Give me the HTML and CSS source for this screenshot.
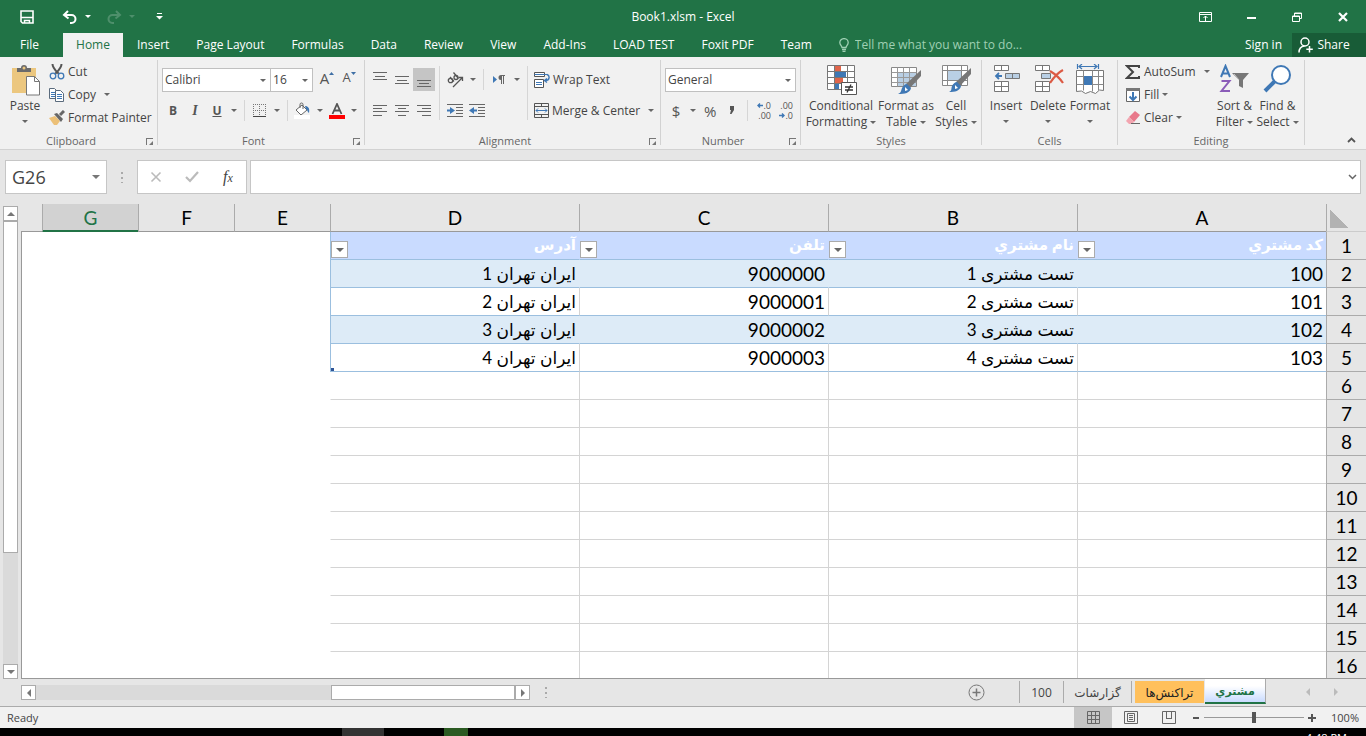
FILE: index.html
```html
<!DOCTYPE html>
<html lang="en">

<head>
    <meta charset="UTF-8">
    <meta name="viewport" content="width=device-width, initial-scale=1.0">
    <title>Book1.xlsm - Excel</title>
    <link rel="stylesheet" href="styles.css">
</head>

<body>
    <header class="top">
        <div class="titlebar">
            <div class="quick">
                <button class="save" aria-label="Save">
                    <svg width="14" height="14" viewBox="0 0 14 14" fill="none" stroke="#fff" stroke-width="1.600">
                        <path d="M1 1h12v12H2.500L1 11.500z" />
                        <path d="M1 7.500h12M4.500 13v-2.500h5V13" stroke-width="1.500" />
                    </svg>
                </button>
                <button class="undo" aria-label="Undo">
                    <svg width="16" height="14" viewBox="0 0 16 14" fill="none" stroke="#fff" stroke-width="2">
                        <path d="M6 1L2 5l4.500 3.500M2 5h7.500a4 4 0 0 1 0 8H8" />
                    </svg>
                </button>
                <button class="drop" aria-label="Undo list"><span class="caret"></span></button>
                <button class="undo dim" aria-label="Redo">
                    <svg width="16" height="14" viewBox="0 0 16 14" fill="none" stroke="#fff" stroke-width="2">
                        <path d="M10 1l4 4-4.500 3.500M14 5H6.500a4 4 0 0 0 0 8H8" />
                    </svg>
                </button>
                <button class="drop dim" aria-label="Redo list"><span class="caret"></span></button>
                <button class="customize" aria-label="Customize Quick Access Toolbar">
                    <svg width="7" height="7" viewBox="0 0 7 7" fill="#fff">
                        <path d="M1 0h5v1H1zM0 3h7L3.500 6.500z" />
                    </svg>
                </button>
            </div>
            <h1>Book1.xlsm - Excel</h1>
            <div class="window-buttons">
                <button aria-label="Ribbon Display Options">
                    <svg width="13" height="10" viewBox="0 0 13 10" fill="none" stroke="#fff">
                        <path d="M.5.500h12v9H.5zM.5 2.500h12M6.500 9V4M4.500 6l2-2 2 2" />
                    </svg>
                </button>
                <button aria-label="Minimize">
                    <svg width="9" height="6" viewBox="0 0 9 6"><path d="M0 3h9v2H0z" fill="#fff" /></svg>
                </button>
                <button aria-label="Restore Down">
                    <svg width="10" height="10" viewBox="0 0 10 10" fill="none" stroke="#fff">
                        <path d="M.5 4h7v5.500h-7zM0 4.500h8M2.500 4V1h7v5.500h-2M2 1.500h8" />
                    </svg>
                </button>
                <button aria-label="Close">
                    <svg width="10" height="10" viewBox="0 0 10 10"><path d="M1 1l8 8M9 1L1 9" stroke="#fff" stroke-width="2.200" /></svg>
                </button>
            </div>
        </div>
        <nav class="tabs">
            <a class="file" href="#">File</a>
            <a class="active" href="#">Home</a>
            <a href="#">Insert</a>
            <a href="#">Page Layout</a>
            <a href="#">Formulas</a>
            <a href="#">Data</a>
            <a href="#">Review</a>
            <a href="#">View</a>
            <a href="#">Add-Ins</a>
            <a href="#">LOAD TEST</a>
            <a href="#">Foxit PDF</a>
            <a href="#">Team</a>
            <label class="tell">
                <svg width="10" height="14" viewBox="0 0 10 14" fill="none" stroke="#9fd0b3" stroke-width="1.300">
                    <path d="M3 9.500C3 8 .8 7 .8 4.600a4.200 4 0 0 1 8.400 0C9.200 7 7 8 7 9.500zM3 11.500h4M3.500 13.300h3" />
                </svg>
                <input type="text" placeholder="Tell me what you want to do..." aria-label="Tell me what you want to do">
            </label>
            <a class="signin" href="#">Sign in</a>
            <button class="share">
                <svg width="15" height="16" viewBox="0 0 15 16" fill="none" stroke="#fff" stroke-width="1.500">
                    <circle cx="7" cy="5" r="4" />
                    <path d="M1 15.500c0-4 2-6 5.500-6.500M11.500 9v6.500M8.300 12.300h6.500" />
                </svg>
                Share
            </button>
        </nav>
    </header>

    <section class="ribbon">
        <div class="group clipboard">
            <div class="group-body">
                <button class="big paste">
                    <svg width="32" height="32" viewBox="0 0 32 32">
                        <path d="M3 4h24v25H3z" fill="#ecc77f" />
                        <path d="M8 8V4h4a3 3 0 0 1 6 0h4v4z" fill="#6b6b6b" />
                        <circle cx="15" cy="4" r="1.500" fill="#ecc77f" />
                        <path d="M17.500 12.500h8l5 5v13.500h-13z" fill="#fff" stroke="#777" />
                        <path d="M25.500 12.500v5h5" fill="none" stroke="#777" />
                    </svg>
                    <span>Paste</span>
                    <span class="caret"></span>
                </button>
                <div class="stack">
                    <button class="line">
                        <svg width="16" height="16" viewBox="0 0 16 16" fill="none">
                            <path d="M3.500 0c0 4 2.500 6 6.500 10M12.500 0C12.500 4 10 6 6 10" stroke="#555" stroke-width="2" />
                            <circle cx="4" cy="12" r="2.800" stroke="#3f78b5" stroke-width="1.300" />
                            <circle cx="12" cy="12" r="2.800" stroke="#3f78b5" stroke-width="1.300" />
                        </svg>
                        Cut
                    </button>
                    <button class="line">
                        <svg width="16" height="16" viewBox="0 0 16 16" fill="#fff" stroke="#5a6b7d">
                            <path d="M.5 1.500h5l2 2v8h-7z" />
                            <path d="M2 5.500h4M2 7.500h4M2 9.500h4" stroke="#3f78b5" />
                            <path d="M6.500 3.500h5l3 3v8h-8z" />
                            <path d="M8 7.500h5M8 9.500h5M8 11.500h5" stroke="#3f78b5" />
                        </svg>
                        Copy <span class="caret far"></span>
                    </button>
                    <button class="line">
                        <svg width="16" height="16" viewBox="0 0 16 16">
                            <path d="M0 8l6-2 5 5-3 4H5z" fill="#ecc077" />
                            <path d="M5 4l3-1 6 6-2 3z" fill="#666" />
                            <path d="M11 5l4-4" stroke="#666" stroke-width="3" />
                        </svg>
                        Format Painter
                    </button>
                </div>
            </div>
            <div class="group-title"><span>Clipboard</span><button class="launcher" aria-label="Clipboard settings"></button></div>
        </div>

        <div class="group font">
            <div class="group-body rows">
                <div class="row">
                    <span class="combo name"><select aria-label="Font"><option>Calibri</option></select></span>
                    <span class="combo size"><select aria-label="Font size"><option>16</option></select></span>
                    <button class="tool grow" aria-label="Increase Font Size">A<svg width="5" height="3" viewBox="0 0 5 3"><path d="M0 3h5L2.500 0z" fill="#3f6fa5" /></svg></button>
                    <button class="tool shrink" aria-label="Decrease Font Size">A<svg width="5" height="3" viewBox="0 0 5 3"><path d="M0 0h5L2.500 3z" fill="#3f6fa5" /></svg></button>
                </div>
                <div class="row">
                    <button class="tool"><b>B</b></button>
                    <button class="tool italic"><i>I</i></button>
                    <button class="tool"><u>U</u></button>
                    <button class="drop" aria-label="Underline list"><span class="caret"></span></button>
                    <span class="sep"></span>
                    <button class="tool" aria-label="Borders">
                        <svg width="14" height="14" viewBox="0 0 14 14" fill="none" stroke="#777" stroke-dasharray="1 1">
                            <path d="M0 .5h13M0 6.500h13M.5 0v12M6.500 0v12M12.500 0v12" />
                            <path d="M0 12.500h13" stroke="#444" stroke-dasharray="none" />
                        </svg>
                    </button>
                    <button class="drop" aria-label="Border list"><span class="caret"></span></button>
                    <span class="sep"></span>
                    <button class="tool" aria-label="Fill Color">
                        <svg width="17" height="17" viewBox="0 0 17 17">
                            <path d="M2 8l6-5 5 5-6 5z" fill="#fff" stroke="#666" />
                            <path d="M6 6V2.500a1.500 1.500 0 0 1 3 0V7" fill="none" stroke="#666" />
                            <path d="M11 4c3 0 5 2 4 7-2-1-1-3-3-4z" fill="#3f78b5" />
                            <path d="M0 13h16v4H0z" fill="#fff" />
                        </svg>
                    </button>
                    <button class="drop" aria-label="Fill list"><span class="caret"></span></button>
                    <button class="tool" aria-label="Font Color">
                        <svg width="16" height="16" viewBox="0 0 16 16">
                            <path d="M3.500 11L8 1l4.500 10M5 7.500h6" fill="none" stroke="#555" stroke-width="1.800" />
                            <path d="M0 12h16v4H0z" fill="#f00" />
                        </svg>
                    </button>
                    <button class="drop" aria-label="Font color list"><span class="caret"></span></button>
                </div>
            </div>
            <div class="group-title"><span>Font</span><button class="launcher" aria-label="Font settings"></button></div>
        </div>

        <div class="group alignment">
            <div class="group-body">
                <div class="rows">
                    <div class="row">
                        <button class="tool" aria-label="Top Align"><svg width="14" height="16" viewBox="0 0 14 16" stroke="#666"><path d="M0 .5h14M2 4.500h10M0 7.500h14" /></svg></button>
                        <button class="tool" aria-label="Middle Align"><svg width="14" height="16" viewBox="0 0 14 16" stroke="#666"><path d="M0 4.500h14M2 8.500h10M0 11.500h14" /></svg></button>
                        <button class="tool on" aria-label="Bottom Align"><svg width="14" height="16" viewBox="0 0 14 16" stroke="#666"><path d="M0 8.500h14M2 11.500h10M0 14.500h14" /></svg></button>
                    </div>
                    <div class="row">
                        <button class="tool" aria-label="Align Left"><svg width="14" height="12" viewBox="0 0 14 12" stroke="#666"><path d="M0 .5h14M0 3.500h9M0 6.500h14M0 10.500h9" /></svg></button>
                        <button class="tool" aria-label="Center"><svg width="14" height="12" viewBox="0 0 14 12" stroke="#666"><path d="M0 .5h14M3 3.500h8M0 6.500h14M3 10.500h8" /></svg></button>
                        <button class="tool" aria-label="Align Right"><svg width="14" height="12" viewBox="0 0 14 12" stroke="#666"><path d="M0 .5h14M5 3.500h9M0 6.500h14M5 10.500h9" /></svg></button>
                    </div>
                </div>
                <span class="sep tall"></span>
                <div class="rows">
                    <div class="row">
                        <button class="tool" aria-label="Orientation">
                            <svg width="18" height="16" viewBox="0 0 18 16" fill="none" stroke="#555" stroke-width="1.300">
                                <circle cx="4.500" cy="8.500" r="2.200" /><path d="M4 5l4 4.500M7.500.500l5 6" /><circle cx="10" cy="5.500" r="2" />
                                <path d="M7 15l9-9M13 5.500h3.500V9" />
                            </svg>
                        </button>
                        <button class="drop" aria-label="Orientation list"><span class="caret"></span></button>
                        <span class="sep"></span>
                        <button class="tool" aria-label="Text direction">
                            <svg width="12" height="10" viewBox="0 0 12 10">
                                <path d="M0 1l4 3.500L0 8z" fill="#3f78b5" />
                                <path d="M8 0h4v1h-1v8h-1V1H9v8H8V5a2.500 2.500 0 0 1 0-5z" fill="#666" />
                            </svg>
                        </button>
                        <button class="drop" aria-label="Direction list"><span class="caret"></span></button>
                    </div>
                    <div class="row">
                        <button class="tool" aria-label="Decrease Indent">
                            <svg width="16" height="14" viewBox="0 0 16 14"><path d="M0 .5h16M9 3.500h7M9 6.500h7M9 9.500h7M0 12.500h16" stroke="#666" /><path d="M0 5.500h3V3l5 3.500L3 10V7.500H0z" fill="#3f78b5" /></svg>
                        </button>
                        <button class="tool" aria-label="Increase Indent">
                            <svg width="16" height="14" viewBox="0 0 16 14"><path d="M0 .5h16M9 3.500h7M9 6.500h7M9 9.500h7M0 12.500h16" stroke="#666" /><path d="M8 5.500H5V3L0 6.500 5 10V7.500h3z" fill="#3f78b5" /></svg>
                        </button>
                    </div>
                </div>
                <span class="sep tall"></span>
                <div class="rows wide">
                    <div class="row">
                        <button class="line">
                            <svg width="16" height="16" viewBox="0 0 16 16" fill="none" stroke="#555">
                                <path d="M.5.500h10v4H.5zM.5 7.500h9v8h-9z" fill="#fff" />
                                <path d="M.5 2.500h13M2 10.500h6M2 12.500h6" stroke="#3f78b5" />
                                <path d="M13 2.500c3 1 3 6-1.500 6M13 6.500l-2.500 2 2.500 2" stroke="#3f78b5" stroke-width="1.400" />
                            </svg>
                            Wrap Text
                        </button>
                    </div>
                    <div class="row">
                        <button class="line">
                            <svg width="15" height="15" viewBox="0 0 15 15" fill="none" stroke="#555">
                                <path d="M.5.500h14v14H.5zM.5 3.500h14M.5 11.500h14M7.500.500v3M7.500 11.500v3" />
                                <path d="M2 7.500h11M4 5.500l-2 2 2 2M11 5.500l2 2-2 2" stroke="#3f78b5" />
                            </svg>
                            Merge &amp; Center <span class="caret far"></span>
                        </button>
                    </div>
                </div>
            </div>
            <div class="group-title"><span>Alignment</span><button class="launcher" aria-label="Alignment settings"></button></div>
        </div>

        <div class="group number">
            <div class="group-body rows">
                <div class="row">
                    <span class="combo format"><select aria-label="Number format"><option>General</option></select></span>
                </div>
                <div class="row">
                    <button class="tool sign">$</button>
                    <button class="drop" aria-label="Currency list"><span class="caret"></span></button>
                    <button class="tool sign">%</button>
                    <button class="tool comma" aria-label="Comma Style">
                        <svg width="6" height="9" viewBox="0 0 6 9"><path d="M1 0h4v4L2.500 8H1l1-4H1z" fill="#555" /></svg>
                    </button>
                    <span class="sep"></span>
                    <button class="tool decimals" aria-label="Increase Decimal"><span><svg width="6" height="5" viewBox="0 0 6 5"><path d="M6 2.500H1M3 .5l-2 2 2 2" fill="none" stroke="#3f78b5" stroke-width="1.400" /></svg>.0</span><span>.00</span></button>
                    <button class="tool decimals" aria-label="Decrease Decimal"><span>.00</span><span><svg width="6" height="5" viewBox="0 0 6 5"><path d="M0 2.500h5M3 .5l2 2-2 2" fill="none" stroke="#3f78b5" stroke-width="1.400" /></svg>.0</span></button>
                </div>
            </div>
            <div class="group-title"><span>Number</span><button class="launcher" aria-label="Number settings"></button></div>
        </div>

        <div class="group styles">
            <div class="group-body">
                <button class="big cond">
                    <svg width="32" height="32" viewBox="0 0 32 32">
                        <path d="M2.500 1.500h27v24h-27zM2.500 7.500h27M2.500 13.500h27M2.500 19.500h27M9.500 1.500v24M22.500 1.500v24" fill="#fff" stroke="#777" />
                        <path d="M10 2h6v5h-6zM10 14h8v5h-8z" fill="#e0654b" />
                        <path d="M10 8h11v5H10zM10 20h4v5h-4z" fill="#3f78b5" />
                        <path d="M16.500 18.500h15v12h-15z" fill="#fff" stroke="#555" />
                        <path d="M20 23h8M20 26h8M26 20.500l-4 8" stroke="#333" stroke-width="1.300" />
                    </svg>
                    <span>Conditional<br>Formatting <i class="caret"></i></span>
                </button>
                <button class="big table-style">
                    <svg width="32" height="32" viewBox="0 0 32 32">
                        <path d="M1.500 3.500h25v19h-25z" fill="#fff" stroke="#888" />
                        <path d="M8 9h18v13H8z" fill="#b9cfe4" />
                        <path d="M1.500 8.500h25M1.500 13.500h25M1.500 18.500h25M7.500 3.500v19M13.500 3.500v19M19.500 3.500v19" stroke="#999" />
                        <path d="M31 6v6L20 24l-4-4z" fill="#777" />
                        <path d="M17 20l4 4c-1 5-6 6-13 6 3-1 3-3 4-6 1-2 3-4 5-4z" fill="#3f78b5" />
                        <path d="M15 23l3 3-3 1z" fill="#fff" />
                    </svg>
                    <span>Format as<br>Table <i class="caret"></i></span>
                </button>
                <button class="big cell-style">
                    <svg width="32" height="32" viewBox="0 0 32 32">
                        <path d="M2.500 1.500h25v20h-25zM2.500 6.500h25M2.500 16.500h25M7.500 1.500v20M21.500 1.500v20" fill="#fff" stroke="#888" />
                        <path d="M8 7h13v9H8z" fill="#b9cfe4" />
                        <path d="M31 4v6L20 22l-4-4z" fill="#777" />
                        <path d="M17 18l4 4c-1 5-6 6-12 6 3-1 2-3 3-6 1-2 3-4 5-4z" fill="#3f78b5" />
                        <path d="M15 21l3 3-3 1z" fill="#fff" />
                    </svg>
                    <span>Cell<br>Styles <i class="caret"></i></span>
                </button>
            </div>
            <div class="group-title"><span>Styles</span></div>
        </div>

        <div class="group cells">
            <div class="group-body">
                <button class="big">
                    <svg width="32" height="32" viewBox="0 0 32 32">
                        <path d="M4.500 1.500h14v5h-14zM11.500 1.500v5M4.500 17.500h14v10h-14zM4.500 22.500h14M11.500 17.500v10" fill="#fff" stroke="#777" />
                        <path d="M15.500 9.500h14v5h-14zM22.500 9.500v5" fill="#b9cfe4" stroke="#777" />
                        <path d="M12 12H6M9 9l-3 3 3 3" fill="none" stroke="#3f78b5" stroke-width="1.800" />
                    </svg>
                    <span>Insert</span>
                    <span class="caret"></span>
                </button>
                <button class="big">
                    <svg width="32" height="32" viewBox="0 0 32 32">
                        <path d="M3.500 1.500h14v5h-14zM10.500 1.500v5M3.500 17.500h14v10h-14zM3.500 22.500h14M10.500 17.500v10" fill="#fff" stroke="#777" />
                        <path d="M9.500 9.500h9v5h-9z" fill="#b9cfe4" stroke="#777" />
                        <path d="M18 7c5 3 9 6 13 12M31 6c-6 3-9 7-13 13" fill="none" stroke="#dc5a44" stroke-width="2.200" />
                    </svg>
                    <span>Delete</span>
                    <span class="caret"></span>
                </button>
                <button class="big">
                    <svg width="32" height="32" viewBox="0 0 32 32">
                        <path d="M2.500 6.500h27v20l-4-.5-4 3.500-5-2-5 2-4-2.500-5 .5z" fill="#fff" stroke="#777" />
                        <path d="M2.500 12.500h27M2.500 20.500h27M9.500 6.500v20M18.500 6.500v21M24.500 6.500v20" stroke="#888" />
                        <path d="M10 12h8v9h-8z" fill="#3f78b5" />
                        <path d="M3.500 0v5M24.500 0v5M5 2.500h18M8 0L5 2.500 8 5M20 0l3 2.500L20 5" fill="none" stroke="#3f78b5" stroke-width="1.200" />
                    </svg>
                    <span>Format</span>
                    <span class="caret"></span>
                </button>
            </div>
            <div class="group-title"><span>Cells</span></div>
        </div>

        <div class="group editing">
            <div class="group-body">
                <div class="stack">
                    <button class="line">
                        <svg width="16" height="16" viewBox="0 0 16 16" fill="none" stroke="#444" stroke-width="2"><path d="M14 4V2H2l6 6-6 6h12v-2" /></svg>
                        AutoSum <span class="caret far"></span>
                    </button>
                    <button class="line">
                        <svg width="16" height="16" viewBox="0 0 16 16" fill="none"><path d="M1.500 1.500h13v13h-13z" fill="#fff" stroke="#666" /><path d="M1 1h14v3H1z" fill="#777" /><path d="M8 5v8M4.500 9.500L8 13l3.500-3.500" stroke="#3f78b5" stroke-width="2" /></svg>
                        Fill <span class="caret"></span>
                    </button>
                    <button class="line">
                        <svg width="16" height="16" viewBox="0 0 16 16"><path d="M4 7l6-6 5 4-6 7z" fill="#e8788a" /><path d="M4 7l5 5-2 2H4L1 11z" fill="#f3a5b0" /><path d="M6 13.500h9" stroke="#666" /></svg>
                        Clear <span class="caret"></span>
                    </button>
                </div>
                <button class="big">
                    <svg width="32" height="32" viewBox="0 0 32 32" fill="none">
                        <path d="M2 13L6.500 2 11 13M3.500 9.500h6" stroke="#3f78b5" stroke-width="2" />
                        <path d="M2.500 17h8l-8 10h8.500" stroke="#8a5cb8" stroke-width="2" />
                        <path d="M13 9h17l-6 7v8l-4-2v-6z" fill="#777" />
                        <path d="M15 10l5 6" stroke="#ccc" />
                    </svg>
                    <span>Sort &amp;<br>Filter <i class="caret"></i></span>
                </button>
                <button class="big">
                    <svg width="32" height="32" viewBox="0 0 32 32" fill="none" stroke="#3f78b5">
                        <circle cx="19" cy="11" r="9" fill="#fff" stroke-width="2" />
                        <path d="M12.500 17.500L3 27" stroke-width="4" />
                    </svg>
                    <span>Find &amp;<br>Select <i class="caret"></i></span>
                </button>
            </div>
            <div class="group-title"><span>Editing</span></div>
        </div>

        <button class="collapse" aria-label="Collapse the Ribbon">
            <svg width="9" height="6" viewBox="0 0 9 6"><path d="M1 5l3.500-3.500L8 5" fill="none" stroke="#555" stroke-width="1.800" /></svg>
        </button>
    </section>

    <section class="formula">
        <div class="namebox">
            <input type="text" value="G26" aria-label="Name Box">
            <button aria-label="Names"><span class="caret large"></span></button>
        </div>
        <span class="dots"></span>
        <div class="fx">
            <button aria-label="Cancel"><svg width="12" height="12" viewBox="0 0 12 12"><path d="M1.500 1.500l9 9M10.500 1.500l-9 9" stroke="#bbb" stroke-width="1.600" /></svg></button>
            <button aria-label="Enter"><svg width="14" height="12" viewBox="0 0 14 12"><path d="M1 6l4 4 8-9" fill="none" stroke="#bbb" stroke-width="2.200" /></svg></button>
            <button class="function" aria-label="Insert Function"><i>f<small>x</small></i></button>
        </div>
        <div class="formula-input">
            <input type="text" aria-label="Formula Bar">
            <button aria-label="Expand Formula Bar"><svg width="9" height="6" viewBox="0 0 9 6"><path d="M1 1l3.500 3.500L8 1" fill="none" stroke="#666" stroke-width="1.500" /></svg></button>
        </div>
    </section>

    <main class="workbook">
        <div class="vscroll">
            <button aria-label="Scroll up"><span class="arrow up"></span></button>
            <div class="track"><div class="thumb"></div></div>
            <button aria-label="Scroll down"><span class="arrow down"></span></button>
        </div>
        <div class="sheet" dir="rtl">
            <table>
                <colgroup>
                    <col class="col-rows">
                    <col class="col-data" span="4">
                    <col class="col-small" span="3">
                    <col>
                </colgroup>
                <thead>
                    <tr>
                        <th class="corner"></th>
                        <th>A</th>
                        <th>B</th>
                        <th>C</th>
                        <th>D</th>
                        <th>E</th>
                        <th>F</th>
                        <th class="selected">G</th>
                        <th class="edge"></th>
                    </tr>
                </thead>
                <tbody>
                    <tr class="head">
                        <th>1</th>
                        <td><div class="field"><span>كد مشتري</span><button aria-label="Filter"><span class="caret large"></span></button></div></td>
                        <td><div class="field"><span>نام مشتري</span><button aria-label="Filter"><span class="caret large"></span></button></div></td>
                        <td><div class="field"><span>تلفن</span><button aria-label="Filter"><span class="caret large"></span></button></div></td>
                        <td><div class="field"><span>آدرس</span><button aria-label="Filter"><span class="caret large"></span></button></div></td>
                        <td class="blank" colspan="4" rowspan="16"></td>
                    </tr>
                    <tr class="data band">
                        <th>2</th>
                        <td>100</td>
                        <td class="fa">تست مشتری 1</td>
                        <td>9000000</td>
                        <td class="fa">ایران تهران 1</td>
                    </tr>
                    <tr class="data">
                        <th>3</th>
                        <td>101</td>
                        <td class="fa">تست مشتری 2</td>
                        <td>9000001</td>
                        <td class="fa">ایران تهران 2</td>
                    </tr>
                    <tr class="data band">
                        <th>4</th>
                        <td>102</td>
                        <td class="fa">تست مشتری 3</td>
                        <td>9000002</td>
                        <td class="fa">ایران تهران 3</td>
                    </tr>
                    <tr class="data last">
                        <th>5</th>
                        <td>103</td>
                        <td class="fa">تست مشتری 4</td>
                        <td>9000003</td>
                        <td class="fa">ایران تهران 4</td>
                    </tr>
                    <tr><th>6</th><td></td><td></td><td></td><td></td></tr>
                    <tr><th>7</th><td></td><td></td><td></td><td></td></tr>
                    <tr><th>8</th><td></td><td></td><td></td><td></td></tr>
                    <tr><th>9</th><td></td><td></td><td></td><td></td></tr>
                    <tr><th>10</th><td></td><td></td><td></td><td></td></tr>
                    <tr><th>11</th><td></td><td></td><td></td><td></td></tr>
                    <tr><th>12</th><td></td><td></td><td></td><td></td></tr>
                    <tr><th>13</th><td></td><td></td><td></td><td></td></tr>
                    <tr><th>14</th><td></td><td></td><td></td><td></td></tr>
                    <tr><th>15</th><td></td><td></td><td></td><td></td></tr>
                    <tr><th>16</th><td></td><td></td><td></td><td></td></tr>
                </tbody>
            </table>
        </div>
    </main>

    <div class="sheetbar">
        <div class="hscroll">
            <button aria-label="Scroll left"><span class="arrow left"></span></button>
            <div class="track"><div class="thumb"></div></div>
            <button aria-label="Scroll right"><span class="arrow right"></span></button>
        </div>
        <span class="dots"></span>
        <button class="add" aria-label="New sheet">
            <svg width="17" height="17" viewBox="0 0 17 17" fill="none" stroke="#777"><circle cx="8.500" cy="8.500" r="7.500" /><path d="M8.500 4.500v8M4.500 8.500h8" stroke-width="1.500" /></svg>
        </button>
        <div class="sheets" dir="rtl">
            <button class="current">مشتري</button>
            <button class="orange">تراكنش‌ها</button>
            <button class="plain">گزارشات</button>
            <button class="plain">100</button>
        </div>
        <div class="sheet-nav">
            <button aria-label="Previous sheet"><span class="arrow left"></span></button>
            <button aria-label="Next sheet"><span class="arrow right"></span></button>
        </div>
    </div>

    <footer class="status">
        <span class="ready">Ready</span>
        <button class="view on" aria-label="Normal"><svg width="13" height="13" viewBox="0 0 13 13" fill="none" stroke="#666"><path d="M.5.500h12v12H.5zM.5 4.500h12M.5 8.500h12M4.500.500v12M8.500.500v12" /></svg></button>
        <button class="view" aria-label="Page Layout"><svg width="14" height="13" viewBox="0 0 14 13" fill="none" stroke="#666"><path d="M.5.500h13v12H.5zM3.500 2.500h7v8h-7zM5 4.500h4M5 6.500h4M5 8.500h4" /></svg></button>
        <button class="view" aria-label="Page Break Preview"><svg width="14" height="13" viewBox="0 0 14 13" fill="none" stroke="#666"><path d="M.5.500h13v12H.5zM4.500.500v7M9.500.500v7M4 7.500h6" /></svg></button>
        <button class="zoom" aria-label="Zoom out"><svg width="8" height="8" viewBox="0 0 8 8"><path d="M1 3h6v2H1z" fill="#555" /></svg></button>
        <input type="range" min="10" max="190" value="100" aria-label="Zoom">
        <button class="zoom" aria-label="Zoom in"><svg width="8" height="8" viewBox="0 0 8 8"><path d="M0 3h3V0h2v3h3v2H5v3H3V5H0z" fill="#555" /></svg></button>
        <span class="percent">100%</span>
    </footer>

    <div class="taskbar">
        <span class="app gray"></span>
        <span class="app green"></span>
        <span class="clock">4:48 PM</span>
    </div>
</body>

</html>
```

FILE: styles.css
```css
* {
    box-sizing: border-box;
}

body {
    margin: 0;
    height: 100vh;
    display: flex;
    flex-direction: column;
    overflow: hidden;
    font-family: "Open Sans", "Noto Sans", sans-serif;
    font-size: 12px;
    color: #444;
    background: #e6e6e6;
}

button {
    display: flex;
    align-items: center;
    justify-content: center;
    padding: 0;
    border: none;
    background: none;
    font: inherit;
    color: inherit;
    cursor: pointer;
}

input,
select {
    font: inherit;
    color: inherit;
    border: none;
    outline: none;
    padding: 0;
}

svg {
    display: block;
    flex-shrink: 0;
}

.caret {
    display: inline-block;
    flex-shrink: 0;
    border: 3px solid transparent;
    border-top-color: currentColor;
    border-bottom: none;
}

.caret.large {
    border-width: 4px;
    border-bottom: none;
}

/* title bar */
.top {
    background: #217346;
    color: #fff;
}

.titlebar {
    display: flex;
    height: 33px;
    align-items: center;
}

.titlebar h1 {
    margin: 0;
    font-size: 12px;
    font-weight: normal;
}

.quick,
.window-buttons {
    flex: 1;
    display: flex;
    height: 30px;
}

.save {
    width: 28px;
    margin: 0 20px 0 13px;
}

.undo {
    width: 18px;
}

.quick .drop {
    width: 18px;
    margin-right: 8px;
}

.dim {
    opacity: .2;
}

.customize {
    width: 20px;
}

.window-buttons {
    justify-content: flex-end;
}

.window-buttons button {
    width: 46px;
}

.tabs {
    display: flex;
    height: 24px;
    line-height: 24px;
}

.tabs a {
    padding: 0 13px 0 14px;
    color: #fff;
    text-decoration: none;
}

.tabs .file {
    width: 63px;
    padding: 0 20px;
}

.tabs .active {
    width: 60px;
    padding: 0;
    text-align: center;
    background: #f1f1f1;
    color: #217346;
}

.tell {
    flex: 1;
    display: flex;
    align-items: center;
    gap: 6px;
    padding-left: 14px;
}

.tell input {
    flex: 1;
    min-width: 0;
    background: none;
}

.tell input::placeholder {
    color: #9fd0b3;
    opacity: 1;
}

.tabs .signin {
    padding: 0 10px;
}

.share {
    width: 74px;
    gap: 4px;
    padding-right: 10px;
    background: #185c37;
}

/* ribbon */
.ribbon {
    display: flex;
    height: 93px;
    padding: 3px 0 4px;
    background: #f1f1f1;
    border-bottom: 1px solid #d2d2d2;
}

.group {
    display: flex;
    flex-direction: column;
    border-right: 1px solid #d2d2d2;
    flex-shrink: 0;
}

.group-body {
    flex: 1;
    display: flex;
}

.group-title {
    display: flex;
    height: 10px;
    line-height: 12px;
    font-size: 11px;
    color: #666;
}

.group-title span {
    flex: 1;
    text-align: center;
}

.launcher {
    position: relative;
    width: 7px;
    height: 7px;
    margin: 3px 4px 0;
    border-top: 1px solid #777;
    border-left: 1px solid #777;
}

.launcher::after {
    content: "";
    position: absolute;
    right: 0;
    bottom: 0;
    border: 2px solid #777;
    border-top-color: transparent;
    border-left-color: transparent;
}

.clipboard {
    width: 158px;
}

.font {
    width: 207px;
}

.alignment {
    width: 296px;
}

.number {
    width: 140px;
}

.styles {
    width: 181px;
}

.cells {
    width: 136px;
}

.editing {
    width: 187px;
}

.big {
    flex-direction: column;
    justify-content: flex-start;
    width: 43px;
    padding-top: 4px;
    line-height: 16px;
    white-space: nowrap;
}

.big svg {
    margin-bottom: 2px;
}

.big > .caret {
    margin-top: 6px;
}

.big .caret {
    color: #666;
    vertical-align: 2px;
}

.paste {
    width: 44px;
    margin-left: 3px;
}

.cond {
    width: 78px;
    margin-left: 1px;
}

.table-style {
    width: 52px;
}

.cell-style {
    width: 48px;
}

.cells .big {
    width: 42px;
}

.cells .group-body,
.editing .group-body {
    padding-left: 3px;
}

.stack {
    display: flex;
    flex-direction: column;
}

.clipboard .stack {
    padding-left: 2px;
}

.editing .stack {
    width: 92px;
    padding-left: 4px;
}

.line {
    height: 23px;
    gap: 3px;
    justify-content: flex-start;
    white-space: nowrap;
}

.line .caret {
    color: #666;
}

.caret.far {
    margin-left: 5px;
}

.rows {
    display: flex;
    flex-direction: column;
    gap: 8px;
    padding: 8px 4px 0;
}

.row {
    display: flex;
    height: 23px;
    align-items: center;
}

.alignment .rows.wide {
    padding-left: 6px;
}

.tool {
    width: 22px;
    height: 23px;
    flex-shrink: 0;
    color: #555;
}

.tool.on {
    background: #c5c5c5;
}

.italic {
    font-family: "Liberation Serif", serif;
    font-size: 14px;
    font-weight: bold;
}

.tool u {
    font-weight: bold;
}

.drop {
    width: 13px;
    height: 23px;
    color: #666;
}

.top .drop {
    height: 30px;
    color: #fff;
}

.sep {
    width: 1px;
    height: 21px;
    margin: 0 4px;
    background: #d6d6d6;
}

.sep.tall {
    height: 54px;
    margin: 6px 0 0;
}

.combo {
    position: relative;
    height: 24px;
    border: 1px solid #c0c0c0;
    background: #fff;
}

.combo::after {
    content: "";
    position: absolute;
    right: 4px;
    top: 10px;
    border: 3px solid transparent;
    border-top-color: #666;
    border-bottom: none;
    pointer-events: none;
}

.combo select {
    width: 100%;
    height: 22px;
    padding-left: 2px;
    appearance: none;
    background: none;
}

.combo.name {
    width: 112px;
}

.combo.size {
    width: 44px;
    margin-left: -1px;
}

.combo.format {
    width: 132px;
}

.grow {
    align-items: baseline;
    margin-left: 3px;
    font-size: 15px;
}

.shrink {
    align-items: baseline;
    font-size: 13px;
}

.grow svg,
.shrink svg {
    align-self: flex-start;
    margin-top: 4px;
}

.sign {
    font-size: 15px;
}

.decimals {
    flex-direction: column;
    font-size: 9px;
    line-height: 10px;
    align-items: flex-end;
    padding-right: 3px;
}

.decimals span {
    display: flex;
    align-items: center;
}

.collapse {
    align-self: flex-end;
    width: 18px;
    height: 10px;
    margin: 0 6px 0 auto;
}

/* formula bar */
.formula {
    display: flex;
    align-items: center;
    height: 54px;
    padding: 0 5px;
}

.namebox,
.fx,
.formula-input {
    display: flex;
    height: 34px;
    border: 1px solid #c6c6c6;
    background: #fff;
}

.namebox {
    width: 102px;
}

.namebox input {
    width: 80px;
    padding-left: 6px;
    font-size: 18px;
}

.namebox button {
    width: 20px;
    color: #777;
}

.dots {
    width: 2px;
    height: 11px;
    background: repeating-linear-gradient(#aaa 0 2px, transparent 2px 5px);
}

.formula .dots {
    margin: 0 14px;
}

.fx {
    width: 110px;
    margin-right: 3px;
}

.fx button {
    flex: 1;
}

.function {
    font-family: "Liberation Serif", serif;
    font-size: 16px;
}

.function small {
    font-size: 12px;
}

.formula-input {
    flex: 1;
}

.formula-input input {
    flex: 1;
    min-width: 0;
    font-size: 18px;
}

.formula-input button {
    width: 16px;
}

/* sheet */
.workbook {
    flex: 1;
    min-height: 0;
    display: flex;
}

.vscroll {
    display: flex;
    flex-direction: column;
    width: 15px;
    margin: 2px 3px 0;
}

.vscroll button,
.hscroll button {
    width: 15px;
    height: 15px;
    border: 1px solid #ababab;
    background: #fff;
}

.track {
    flex: 1;
    background: #dadada;
}

.thumb {
    background: #fff;
    border: 1px solid #ababab;
}

.vscroll .thumb {
    height: 75%;
}

.arrow {
    border: 4px solid transparent;
    color: #777;
}

.arrow.up {
    border-bottom-color: currentColor;
    border-top: none;
}

.arrow.down {
    border-top-color: currentColor;
    border-bottom: none;
}

.arrow.left {
    border-right-color: currentColor;
    border-left: none;
}

.arrow.right {
    border-left-color: currentColor;
    border-right: none;
}

.sheet {
    flex: 1;
    overflow: hidden;
    border-bottom: 1px solid #999;
}

table {
    width: 100%;
    table-layout: fixed;
    border-spacing: 0;
    font-family: Lato, "DejaVu Sans", sans-serif;
    font-size: 19px;
    color: #000;
}

.col-rows {
    width: 40px;
}

.col-data {
    width: 249px;
}

.col-small {
    width: 96px;
}

th,
td {
    height: 28px;
    padding: 0;
    line-height: 27px;
    border-bottom: 1px solid #d4d4d4;
    border-left: 1px solid #d4d4d4;
    white-space: nowrap;
}

th {
    font-weight: normal;
    background: #e6e6e6;
    border-color: #ababab;
}

thead th {
    border-bottom-color: #999;
}

thead .selected {
    background: #d2d2d2;
    color: #217346;
    border-bottom-color: #217346;
    box-shadow: inset 0 -1px #217346;
}

thead .edge {
    border-left: none;
}

/* the select-all triangle */
thead .corner {
    background: linear-gradient(to top right, #b2b2b2 50%, transparent 50%) 3px 5px / 19px 19px no-repeat #e6e6e6;
    border-bottom-color: #ccc;
}

td {
    padding-right: 3px;
    background: #fff;
    text-align: right;
}

td.fa {
    font-size: 17px;
}

tbody tr td:nth-child(5) {
    border-left-color: #fff;
}

.head td,
.data td {
    border-bottom-color: #9bbfdf;
}

.head td {
    background: #c9dbff;
    border-left-color: #c9dbff;
    color: #fff;
    font-weight: bold;
}

.band td {
    background: #ddebf7;
    border-left-color: #ddebf7;
}

tbody tr.head td:nth-child(5),
tbody tr.data td:nth-child(5) {
    border-left-color: #9bbfdf;
}

.last td:nth-child(5) {
    background: linear-gradient(#2f5597, #2f5597) left bottom / 3px 3px no-repeat #fff;
}

tbody td.blank {
    border-left: 1px solid #999;
    border-bottom: none;
    background: #fff;
}

.field {
    display: flex;
    height: 27px;
    justify-content: space-between;
    line-height: 24px;
    font-size: 15px;
}

.field button {
    align-self: flex-end;
    width: 17px;
    height: 17px;
    margin-bottom: 1px;
    border: 1px solid #ababab;
    background: #fff;
    color: #666;
}

/* sheet tabs */
.sheetbar {
    display: flex;
    height: 28px;
    padding-left: 21px;
    border-bottom: 1px solid #ababab;
}

.hscroll {
    display: flex;
    width: 509px;
    margin-top: 6px;
    height: 15px;
}

.hscroll .thumb {
    width: 184px;
    height: 15px;
    margin-left: auto;
}

.sheetbar .dots {
    margin: 8px auto 0 15px;
}

.add {
    width: 20px;
    height: 26px;
    margin-right: 33px;
}

.sheets {
    display: flex;
    font-family: "Open Sans", "DejaVu Sans", sans-serif;
}

.sheets button {
    height: 22px;
    margin-top: 2px;
}

.sheets .current {
    width: 61px;
    height: 25px;
    margin-top: 0;
    border-bottom: 2px solid #217346;
    border-right: 1px solid #ababab;
    background: linear-gradient(#fff 30%, #c9dbff);
    color: #217346;
    font-size: 11px;
    font-weight: bold;
}

.sheets .orange {
    width: 69px;
    margin: 2px 1px 0 3px;
    background: #ffc05c;
    color: #222;
}

.sheets .plain {
    border-left: 1px solid #ababab;
    width: 44px;
}

.sheets .orange + .plain {
    width: 69px;
    border-right: 1px solid #ababab;
}

.sheet-nav {
    display: flex;
    width: 100px;
    padding-left: 28px;
}

.sheet-nav button {
    width: 28px;
    height: 26px;
}

.sheet-nav .arrow {
    color: #bbb;
}

/* status bar */
.status {
    display: flex;
    align-items: center;
    height: 21px;
    padding: 0 7px;
    background: #f1f1f1;
    font-size: 11px;
}

.ready {
    margin-right: auto;
}

.view {
    width: 38px;
    height: 21px;
}

.view.on {
    background: #c6c6c6;
}

.zoom {
    width: 16px;
    height: 21px;
}

.status input {
    width: 100px;
    height: 12px;
    margin: 0;
    appearance: none;
    background: linear-gradient(#999, #999) center / 100% 1px no-repeat;
}

.status input::-webkit-slider-thumb {
    appearance: none;
    width: 4px;
    height: 11px;
    background: #555;
}

.percent {
    width: 39px;
    text-align: right;
}

/* only the top edge of the system bar is visible */
.taskbar {
    display: flex;
    height: 8px;
    overflow: hidden;
    background: #000;
    color: #fff;
}

.app {
    margin-left: 342px;
    width: 42px;
    background: #333;
}

.app.green {
    margin-left: 60px;
    width: 24px;
    background: #2b5a22;
}

.clock {
    margin-left: auto;
    padding-right: 19px;
    font-size: 11px;
    line-height: 20px;
}
```
